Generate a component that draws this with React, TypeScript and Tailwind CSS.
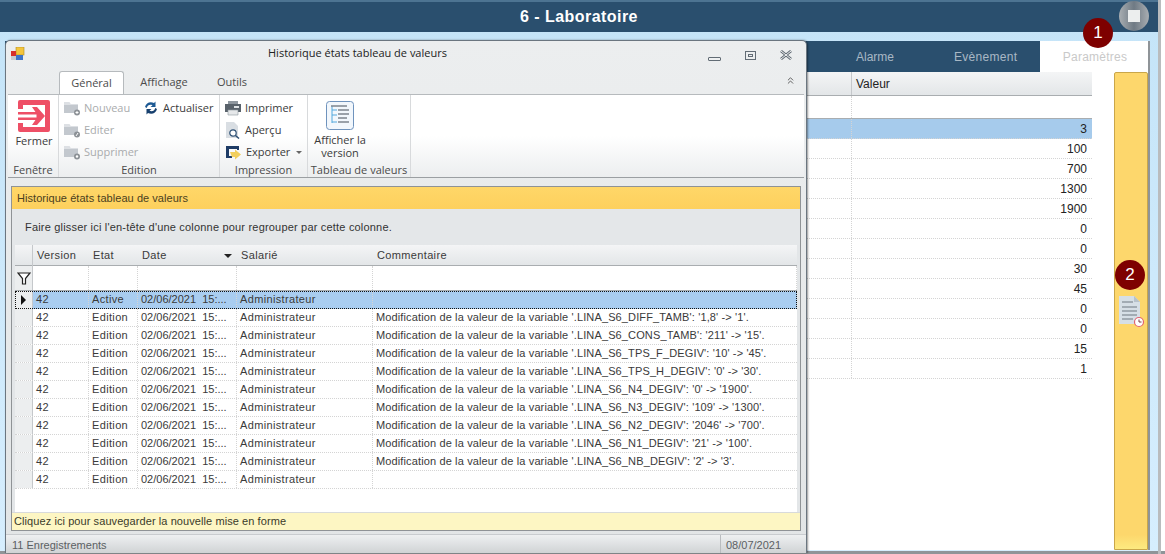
import React from 'react';
import { ChevronsUp } from 'lucide-react';

const comments = [
    '',
    "Modification de la valeur de la variable '.LINA_S6_DIFF_TAMB': '1,8' -> '1'.",
    "Modification de la valeur de la variable '.LINA_S6_CONS_TAMB': '211' -> '15'.",
    "Modification de la valeur de la variable '.LINA_S6_TPS_F_DEGIV': '10' -> '45'.",
    "Modification de la valeur de la variable '.LINA_S6_TPS_H_DEGIV': '0' -> '30'.",
    "Modification de la valeur de la variable '.LINA_S6_N4_DEGIV': '0' -> '1900'.",
    "Modification de la valeur de la variable '.LINA_S6_N3_DEGIV': '109' -> '1300'.",
    "Modification de la valeur de la variable '.LINA_S6_N2_DEGIV': '2046' -> '700'.",
    "Modification de la valeur de la variable '.LINA_S6_N1_DEGIV': '21' -> '100'.",
    "Modification de la valeur de la variable '.LINA_S6_NB_DEGIV': '2' -> '3'.",
    '',
];

const values = ['3', '100', '700', '1300', '1900', '0', '0', '30', '45', '0', '0', '15', '1'];

const gridCols = 'grid grid-cols-[18px_56px_49px_99px_136px_424px]';

function FolderIcon({ mark }: { mark: string }) {
    return (
        <svg width="16" height="15" viewBox="0 0 16 15" className="shrink-0">
            <path d="M0 1h5l1.500 2H14v9H0z" fill="#c3c8ce" />
            <path d="M0 1h5l1.500 2H14v1H0z" fill="#dde0e4" />
            <circle cx="13" cy="11.500" r="3" fill="#8c9196" />
            {mark === 'plus' && <path d="M11.500 11.500h3M13 10v3" stroke="#fff" strokeWidth="1" />}
            {mark === 'edit' && <path d="M12 13l2-3" stroke="#fff" strokeWidth="1" />}
            {mark === 'del' && <circle cx="13" cy="11.500" r="1.200" fill="#fff" />}
        </svg>
    );
}

function CloseIcon() {
    return (
        <svg width="32" height="32" viewBox="0 0 32 32">
            <path d="M0 9V2a2 2 0 0 1 2-2h28a2 2 0 0 1 2 2v28a2 2 0 0 1-2 2H2a2 2 0 0 1-2-2v-7h5v4h22V5H5v4z" fill="#ee4f66" />
            <path d="M0 12h20v2.500H0zM0 17.500h20V20H0z" fill="#ee4f66" />
            <path d="M14 7h5l8 9-8 9h-5l4.500-6.500v-5z" fill="#ee4f66" />
        </svg>
    );
}

function RefreshIcon() {
    return (
        <svg width="16" height="16" viewBox="0 0 16 16">
            <path d="M2 7c1-4 5-6 9-4l1.500-1.500V7H7.500l2-1.800C7 4 4.500 5 3.800 8z" fill="#1d5a94" />
            <path d="M14 9c-1 4-5 6-9 4l-1.500 1.500V9h5l-2 1.800c2.500 1.200 5 .2 5.700-2.800z" fill="#17406e" />
        </svg>
    );
}

function PrintIcon() {
    return (
        <svg width="16" height="16" viewBox="0 0 16 16">
            <path d="M3 1h10v3H3z" fill="#8f979f" />
            <path d="M0 4h16v8H0z" fill="#59626b" />
            <path d="M9 6h5v2H9z" fill="#dfe3e6" />
            <path d="M3 10h10v5H3z" fill="#e6e8ea" stroke="#8f979f" strokeWidth=".6" />
        </svg>
    );
}

function PreviewIcon() {
    return (
        <svg width="16" height="17" viewBox="0 0 16 17">
            <path d="M1 0h8l4 4v12H1z" fill="#d9dee3" />
            <circle cx="8" cy="11" r="3.200" fill="#fff" stroke="#2c4f73" strokeWidth="1.200" />
            <path d="M10.500 13.500L14 16.500" stroke="#2c4f73" strokeWidth="1.500" />
        </svg>
    );
}

function ExportIcon() {
    return (
        <svg width="17" height="15" viewBox="0 0 17 15">
            <path d="M1 1h13v3H4v7h3v2H1z" fill="#1e3c66" />
            <path d="M12 1h2v4h-2z" fill="#1e3c66" />
            <path d="M5 7h5V4.500l6 5-6 5V12H7z" fill="#f2cf5c" />
        </svg>
    );
}

function VersionIcon() {
    return (
        <svg width="28" height="29" viewBox="0 0 28 29">
            <rect x=".5" y=".5" width="27" height="28" rx="3" fill="#f2f7fc" stroke="#6f93bd" />
            <path d="M6 5v17M6 9h5M6 14h5M6 21h5" stroke="#52a8dd" fill="none" />
            <path d="M5 5h16M12 9h11M12 13h11M12 17h9M12 21h11" stroke="#7d858d" strokeWidth="1.600" />
        </svg>
    );
}

function DocClockIcon() {
    return (
        <svg width="26" height="32" viewBox="0 0 26 32">
            <path d="M0 0h15l6 6v22H0z" fill="#d6dfe6" />
            <path d="M15 0l6 6h-6z" fill="#b7c2cb" />
            <path d="M3 6h11M3 11h15M3 15h15M3 19h15M3 23h11" stroke="#6e7881" />
            <circle cx="20" cy="26" r="4.500" fill="#fff" stroke="#e0626f" strokeWidth="1.200" />
            <path d="M20 23.500V26h2.500" stroke="#7c3b44" fill="none" />
        </svg>
    );
}

function AppIcon() {
    return (
        <svg width="14" height="14" viewBox="0 0 14 14">
            <rect x="5" y="0" width="8" height="8" fill="#f4c53d" stroke="#b08a1e" strokeWidth=".6" />
            <rect x="0" y="4" width="5" height="5" fill="#d6302c" />
            <rect x="5" y="8" width="7" height="5" fill="#3d74c9" />
            <rect x="0" y="9" width="5" height="4" fill="#c8ccd0" />
        </svg>
    );
}

function SmallTool({ icon, label, disabled }: { icon: React.ReactNode; label: string; disabled?: boolean }) {
    return (
        <div className={`flex h-[22px] items-center gap-[4px] whitespace-nowrap ${disabled ? 'text-[#a9abad]' : 'text-[#3b3b3b]'}`}>
            {icon}
            <span>{label}</span>
        </div>
    );
}

function RibbonGroup({ title, width, children }: { title: string; width: string; children: React.ReactNode }) {
    return (
        <div className={`flex shrink-0 flex-col border-r border-[#d8dadc] ${width}`}>
            <div className="h-[67px]">{children}</div>
            <div className="text-center leading-[15px] text-[#4a4a4a]">{title}</div>
        </div>
    );
}

function HistoryWindow() {
    return (
        <div className="absolute left-[5px] top-[40px] flex h-[513px] w-[802px] flex-col rounded-t-[5px] border border-b-0 border-[#6b7680] bg-gradient-to-b from-[#eceeef] to-[#e2e5e6] font-['Open_Sans',sans-serif] text-[11px] shadow-[1px_0_2px_rgba(0,0,0,0.4)]">
            <div className="relative flex h-[30px] shrink-0 items-center pl-[262px] text-[#222]">
                <div className="absolute left-[5px] top-[6px]">
                    <AppIcon />
                </div>
                <span className="mt-[-5px]">Historique états tableau de valeurs</span>
                <div className="absolute right-[14px] top-[8px] flex items-center gap-[24px]">
                    <div className="mt-[8px] h-[4px] w-[13px] rounded-[1px] border border-[#626c75] bg-[#eef0f1]" />
                    <div className="flex h-[9px] w-[11px] items-center justify-center border border-[#626c75]">
                        <div className="h-[3px] w-[5px] border border-[#626c75]" />
                    </div>
                    <svg width="12" height="10" viewBox="0 0 12 10">
                        <path d="M1 1l10 8M11 1L1 9" stroke="#626c75" strokeWidth="2.800" />
                        <path d="M1 1l10 8M11 1L1 9" stroke="#f2f3f4" strokeWidth="1" />
                    </svg>
                </div>
            </div>

            <div className="flex h-[23px] shrink-0 items-end pl-[53px] text-[#4b4b4b]">
                <div className="flex h-[23px] w-[65px] items-center justify-center rounded-t-[3px] border border-b-0 border-[#b6babd] bg-white">Général</div>
                <div className="flex h-[22px] w-[80px] items-center justify-center pb-[2px]">Affichage</div>
                <div className="ml-[13px] flex h-[22px] w-[30px] items-center justify-center pb-[2px]">Outils</div>
                <ChevronsUp size={11} className="absolute right-[10px] top-[34px] text-[#555]" />
            </div>

            <div className="mx-[2px] flex h-[84px] shrink-0 border-y border-[#b6babd] border-b-[#9b9fa2] bg-gradient-to-b from-white via-white to-[#eceeef]">
                <RibbonGroup title="Fenêtre" width="w-[51px]">
                    <div className="flex flex-col items-center pt-[5px] pl-[2px]">
                        <CloseIcon />
                        <div className="mt-[1px] text-[#3b3b3b]">Fermer</div>
                    </div>
                </RibbonGroup>
                <RibbonGroup title="Edition" width="w-[161px]">
                    <div className="flex gap-[13px] pl-[5px] pt-[2px]">
                        <div className="w-[66px]">
                            <SmallTool icon={<FolderIcon mark="plus" />} label="Nouveau" disabled />
                            <SmallTool icon={<FolderIcon mark="edit" />} label="Editer" disabled />
                            <SmallTool icon={<FolderIcon mark="del" />} label="Supprimer" disabled />
                        </div>
                        <SmallTool icon={<RefreshIcon />} label="Actualiser" />
                    </div>
                </RibbonGroup>
                <RibbonGroup title="Impression" width="w-[88px]">
                    <div className="pl-[5px] pt-[2px]">
                        <SmallTool icon={<PrintIcon />} label="Imprimer" />
                        <SmallTool icon={<PreviewIcon />} label="Aperçu" />
                        <div className="flex items-center gap-[6px]">
                            <SmallTool icon={<ExportIcon />} label="Exporter" />
                            <div className="h-0 w-0 border-x-[3px] border-t-[3px] border-x-transparent border-t-[#666]" />
                        </div>
                    </div>
                </RibbonGroup>
                <RibbonGroup title="Tableau de valeurs" width="w-[103px]">
                    <div className="flex flex-col items-center pt-[6px] pr-[38px] leading-[13px] text-[#3b3b3b]">
                        <VersionIcon />
                        <div className="mt-[3px] text-center whitespace-nowrap">
                            Afficher la
                            <br />
                            version
                        </div>
                    </div>
                </RibbonGroup>
            </div>

            <div className="mx-[5px] mt-[8px] flex h-[345px] shrink-0 flex-col border border-[#8f9396] bg-[#e3e6e8] font-['Liberation_Sans',sans-serif] tracking-[0.35px] text-[#3a3a3a]">
                <div className="flex h-[22px] shrink-0 items-center bg-gradient-to-b from-[#ffd768] to-[#fdd05d] px-[5px] tracking-[0.05px] text-[#4a4020]">Historique états tableau de valeurs</div>
                <div className="flex h-[36px] shrink-0 items-center bg-[#e4e7e9] pl-[13px] tracking-[0.19px] text-[#333]">Faire glisser ici l'en-tête d'une colonne pour regrouper par cette colonne.</div>

                <div className="mx-[3px] flex min-h-0 flex-1 flex-col bg-white">
                    <div className={`${gridCols} h-[21px] shrink-0 border-b border-[#a9adb0] bg-gradient-to-b from-[#f4f5f6] to-[#e3e6e8] leading-[21px]`}>
                        <div className="border-r border-[#c5c8cb]" />
                        {['Version', 'Etat', 'Date', 'Salarié', 'Commentaire'].map((h) => (
                            <div key={h} className="flex items-center justify-between pr-[5px] pl-[4px]">
                                <span>{h}</span>
                                {h === 'Date' && <div className="h-0 w-0 border-x-[4px] border-t-[4px] border-x-transparent border-t-[#222]" />}
                            </div>
                        ))}
                    </div>
                    <div className={`${gridCols} h-[25px] shrink-0 border-b border-[#a9adb0]`}>
                        <div className="flex items-center justify-center border-r border-[#c5c8cb] bg-[#eceeef]">
                            <svg width="14" height="13" viewBox="0 0 14 13">
                                <path d="M1 1h12L8.500 6.500V12h-3V6.500z" fill="#fff" stroke="#222" strokeWidth="1.200" />
                            </svg>
                        </div>
                        {[0, 1, 2, 3, 4].map((i) => (
                            <div key={i} className="border-r border-dotted border-[#d4d4d4]" />
                        ))}
                    </div>
                    {comments.map((c, i) => (
                        <div
                            key={i}
                            className={`${gridCols} h-[18px] shrink-0 leading-[17px] ${i === 0 ? 'bg-[#a9cdf0] outline-1 -outline-offset-1 outline-dotted outline-[#111]' : 'border-b border-dotted border-[#d4d4d4]'}`}
                        >
                            <div className="flex items-center justify-center border-r border-[#c5c8cb] bg-[#eceeef]">
                                {i === 0 && <div className="h-0 w-0 border-y-[5px] border-l-[5px] border-y-transparent border-l-[#111]" />}
                            </div>
                            <div className="border-r border-dotted border-[#d4d4d4] pl-[3px]">42</div>
                            <div className="border-r border-dotted border-[#d4d4d4] pl-[3px]">{i === 0 ? 'Active' : 'Edition'}</div>
                            <div className="overflow-hidden border-r border-dotted border-[#d4d4d4] pl-[3px] tracking-normal whitespace-pre">02/06/2021  15:...</div>
                            <div className="border-r border-dotted border-[#d4d4d4] pl-[3px]">Administrateur</div>
                            <div className="overflow-hidden pl-[3px] tracking-[0.13px] whitespace-nowrap">{c}</div>
                        </div>
                    ))}
                </div>

                <div className="flex h-[18px] shrink-0 items-center border-t border-[#d8dadb] bg-[#fdf6c3] px-[2px] pb-[1px] tracking-[0.08px] text-[#3a3a2a]">Cliquez ici pour sauvegarder la nouvelle mise en forme</div>
            </div>

            <div className="mt-[3px] flex h-[19px] shrink-0 items-center justify-between border-t border-[#c9cccf] bg-gradient-to-b from-[#eef0f1] to-[#d0d3d5] pl-[6px] font-['Liberation_Sans',sans-serif] text-[#5b5f63]">
                <span className="pt-[3px]">11 Enregistrements</span>
                <div className="flex h-full w-[86px] items-center border-l border-[#b9bcbf] pt-[3px] pl-[5px]">08/07/2021</div>
            </div>
        </div>
    );
}

function ParamsPanel() {
    return (
        <div className="mt-[9px] ml-[5px] flex h-[509px] w-[1143px] flex-col bg-white font-['Liberation_Sans',sans-serif] text-[12px] text-[#222] shadow-[2px_0_0_#8f9498]">
            <div className="flex h-[31px] shrink-0 bg-[#2a4f6e]">
                <div className="flex-1" />
                <div className="flex w-[98px] items-center text-[#a9b8c5]">Alarme</div>
                <div className="flex w-[86px] items-center text-[#a9b8c5]">
                    <span className="tracking-[0.3px]">Evènement</span>
                </div>
                <div className="flex w-[108px] items-center justify-center bg-white pl-[2px] tracking-[0.25px] text-[#c9c9c9]">Paramètres</div>
            </div>
            <div className="flex min-h-0 flex-1">
                <div className="flex-1">
                    <div className="flex h-[24px] border-b border-[#a9adb0] bg-gradient-to-b from-[#f4f5f6] to-[#e3e6e8]">
                        <div className="flex-1 border-r border-[#c5c8cb]" />
                        <div className="flex w-[240px] items-center pl-[4px]">Valeur</div>
                    </div>
                    <div className="flex h-[23px] border-b border-[#a9adb0]">
                        <div className="flex-1 border-r border-dotted border-[#d4d4d4]" />
                        <div className="w-[240px]" />
                    </div>
                    {values.map((v, i) => (
                        <div key={i} className={`flex h-[20px] border-b border-dotted border-[#d4d4d4] leading-[20px] ${i === 0 ? 'bg-[#a6cbec]' : ''}`}>
                            <div className="flex-1 border-r border-dotted border-[#d4d4d4]" />
                            <div className="w-[240px] pr-[5px] text-right">{v}</div>
                        </div>
                    ))}
                </div>
                <div className="ml-[22px] flex w-[34px] shrink-0 flex-col items-center rounded-t-[2px] border border-[#c9a64a] bg-gradient-to-b from-[#fdd76c] via-[#fdd76c] via-[97%] to-[#fdea80] pt-[223px] pl-[1px]">
                    <DocClockIcon />
                </div>
            </div>
        </div>
    );
}

export default function App() {
    return (
        <div className="relative h-[554px] w-[1165px] overflow-hidden bg-white">
            <div className="flex h-[551px] w-[1158px] flex-col bg-gradient-to-b from-[#c4e4f8] to-[#d6eefe]">
                <div className="relative flex h-[32px] shrink-0 items-center justify-center border-t-2 border-[#4d7492] bg-[#2a4f6e]">
                    <span className="font-['Liberation_Sans',sans-serif] text-[16px] font-bold tracking-[0.45px] text-white">6 - Laboratoire</span>
                    <div className="absolute right-[9px] top-[-1px] flex h-[30px] w-[30px] items-center justify-center rounded-full bg-gradient-to-r from-[#a9aeb2] via-[#6f7a84] to-[#a9aeb2]">
                        <div className="h-[12px] w-[12px] bg-[#eceeee]" />
                    </div>
                </div>
                <ParamsPanel />
            </div>
            <div className="absolute inset-x-0 bottom-0 h-[3px] bg-[#8f9498]" />
            <div className="absolute top-0 left-[1158px] h-[554px] w-[3px] bg-[#b9bcbe]" />

            <HistoryWindow />

            <div className="absolute left-[1083px] top-[18px] flex h-[30px] w-[30px] items-center justify-center rounded-full bg-[#7e0000] font-['Liberation_Sans',sans-serif] text-[17px] text-white">1</div>
            <div className="absolute left-[1115px] top-[260px] flex h-[30px] w-[30px] items-center justify-center rounded-full bg-[#7e0000] font-['Liberation_Sans',sans-serif] text-[17px] text-white">2</div>
        </div>
    );
}
